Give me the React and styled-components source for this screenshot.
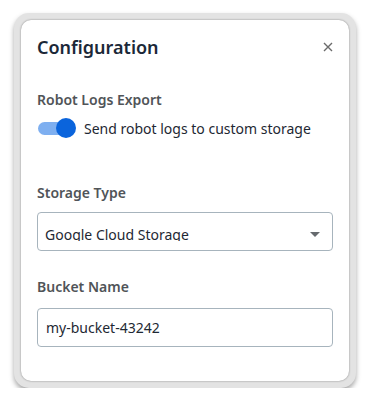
import React from "react";
import styled, { createGlobalStyle } from "styled-components";

const Global = createGlobalStyle`
  html, body { margin: 0; padding: 0; background: #ffffff; }
  body { font-family: "Noto Sans", "Open Sans", sans-serif; }
`;

const Frame = styled.div`
  box-sizing: border-box;
  margin: 13px 0 0 14px;
  width: 342px;
  padding: 7px;
  border-radius: 15px;
  background: #e3e3e3;
  box-shadow: 0 3px 5px rgba(0, 0, 0, 0.35);
`;

const Card = styled.div`
  box-sizing: border-box;
  height: 361px;
  background: #ffffff;
  border-radius: 10px;
  box-shadow: 0 0 2px rgba(0, 0, 0, 0.45);
  padding: 15px 16px 0 16px;
  display: flex;
  flex-direction: column;
`;

const Header = styled.div`
  display: flex;
  align-items: center;
  justify-content: space-between;
  height: 24px;
`;

const Title = styled.h2`
  margin: 0;
  font-size: 18px;
  line-height: 24px;
  font-weight: 600;
  color: #1b2838;
`;

const Close = styled.button`
  border: 0;
  background: none;
  padding: 0;
  width: 16px;
  height: 16px;
  margin-right: -3px;
  display: flex;
  align-items: center;
  justify-content: center;
  cursor: pointer;
`;

const Label = styled.div`
  margin-top: ${(p) => p.$mt}px;
  font-size: 14px;
  line-height: 20px;
  font-weight: 600;
  color: #505458;
`;

const SwitchRow = styled.label`
  margin-top: 6px;
  display: flex;
  align-items: center;
  gap: 8px;
  height: 24px;
  font-size: 14px;
  color: #1e2833;
`;

const Track = styled.span`
  position: relative;
  width: 32px;
  height: 13px;
  margin-left: 1px;
  margin-right: 6px;
  border-radius: 7px;
  background: #7eaff0;
`;

const Thumb = styled.span`
  position: absolute;
  top: 50%;
  right: -6px;
  width: 20px;
  height: 20px;
  margin-top: -10px;
  border-radius: 50%;
  background: #0a64dc;
`;

const Field = styled.div`
  box-sizing: border-box;
  margin-top: ${(p) => p.$mt}px;
  height: 39px;
  border: 1px solid #a7b4bd;
  border-radius: 4px;
  display: flex;
  align-items: ${(p) => (p.$select ? "flex-start" : "center")};
  padding: ${(p) => (p.$select ? "11px 12px 0 7px" : "0 8px")};
  font-size: 14px;
  color: #1e2833;
`;

const SelectValue = styled.span`
  flex: 1;
  display: block;
  height: 16px;
  margin-top: 1px;
  line-height: 20px;
  overflow: hidden;
  white-space: nowrap;
`;

const Arrow = styled.span`
  margin-top: 8px;
  width: 0;
  height: 0;
  border-left: 5px solid transparent;
  border-right: 5px solid transparent;
  border-top: 5px solid #666a6e;
`;

const Value = styled.span`
  line-height: 20px;
`;

export default function App() {
  return (
    <>
      <Global />
      <Frame>
        <Card>
          <Header>
            <Title>Configuration</Title>
            <Close aria-label="close">
              <svg width="10" height="10" viewBox="0 0 10 10">
                <path d="M1 1 L9 9 M9 1 L1 9" stroke="#6b6b6b" strokeWidth="1.4" />
              </svg>
            </Close>
          </Header>
          <Label $mt={31}>Robot Logs Export</Label>
          <SwitchRow>
            <Track>
              <Thumb />
            </Track>
            Send robot logs to custom storage
          </SwitchRow>
          <Label $mt={43}>Storage Type</Label>
          <Field $mt={9} $select>
            <SelectValue>Google Cloud Storage</SelectValue>
            <Arrow />
          </Field>
          <Label $mt={26}>Bucket Name</Label>
          <Field $mt={11}>
            <Value>my-bucket-43242</Value>
          </Field>
        </Card>
      </Frame>
    </>
  );
}
